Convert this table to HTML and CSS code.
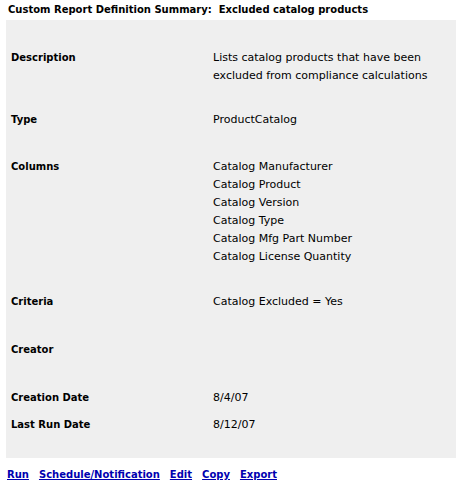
FILE: index.html
```html
<!DOCTYPE html>
<html>
<head>
<meta charset="utf-8">
<link rel="stylesheet" href="styles.css">
</head>
<body>
<div class="title">Custom Report Definition Summary:&nbsp; Excluded catalog products</div>
<div class="panel">
  <div class="row r-desc"><div class="label">Description</div><div class="value">Lists catalog products that have been<br>excluded from compliance calculations</div></div>
  <div class="row r-type"><div class="label">Type</div><div class="value">ProductCatalog</div></div>
  <div class="row r-cols"><div class="label">Columns</div><div class="value">Catalog Manufacturer<br>Catalog Product<br>Catalog Version<br>Catalog Type<br>Catalog Mfg Part Number<br>Catalog License Quantity</div></div>
  <div class="row"><div class="label">Criteria</div><div class="value">Catalog Excluded = Yes</div></div>
  <div class="row r-creator"><div class="label">Creator</div><div class="value"></div></div>
  <div class="row r-cdate"><div class="label">Creation Date</div><div class="value">8/4/07</div></div>
  <div class="row r-ldate"><div class="label">Last Run Date</div><div class="value">8/12/07</div></div>
</div>
<div class="links">
  <a href="#">Run</a>
  <a href="#">Schedule/Notification</a>
  <a href="#">Edit</a>
  <a href="#">Copy</a>
  <a href="#">Export</a>
</div>
</body>
</html>
```
FILE: styles.css
```css
html, body {
  margin: 0;
  padding: 0;
  background: #ffffff;
}
body {
  font-family: "DejaVu Sans", Verdana, sans-serif;
  font-size: 11px;
  color: #000000;
  width: 456px;
  overflow: hidden;
}
.title {
  font-weight: bold;
  font-size: 10px;
  line-height: 18px;
  height: 20px;
  padding-left: 8px;
  box-sizing: border-box;
  padding-top: 1px;
}
.panel {
  margin-left: 6px;
  background: #efefef;
  padding: 29px 0 24px 0;
}
.row {
  display: flex;
  line-height: 18px;
  margin-top: 27px;
}
.row.r-desc { margin-top: 0; }
.row.r-type { margin-top: 26px; }
.row.r-cols { margin-top: 29px; }
.row.r-creator { margin-top: 30px; min-height: 18px; }
.row.r-cdate { margin-top: 30px; }
.row.r-ldate { margin-top: 9px; }
.label {
  width: 202px;
  padding-left: 5px;
  font-weight: bold;
  font-size: 10px;
}
.value {
  flex: 1;
}
.links {
  display: flex;
  gap: 10px;
  padding-left: 7px;
  padding-top: 8px;
  line-height: 18px;
}
.links a {
  color: #0000b0;
  font-weight: bold;
  font-size: 10px;
  text-decoration: underline;
}
```
